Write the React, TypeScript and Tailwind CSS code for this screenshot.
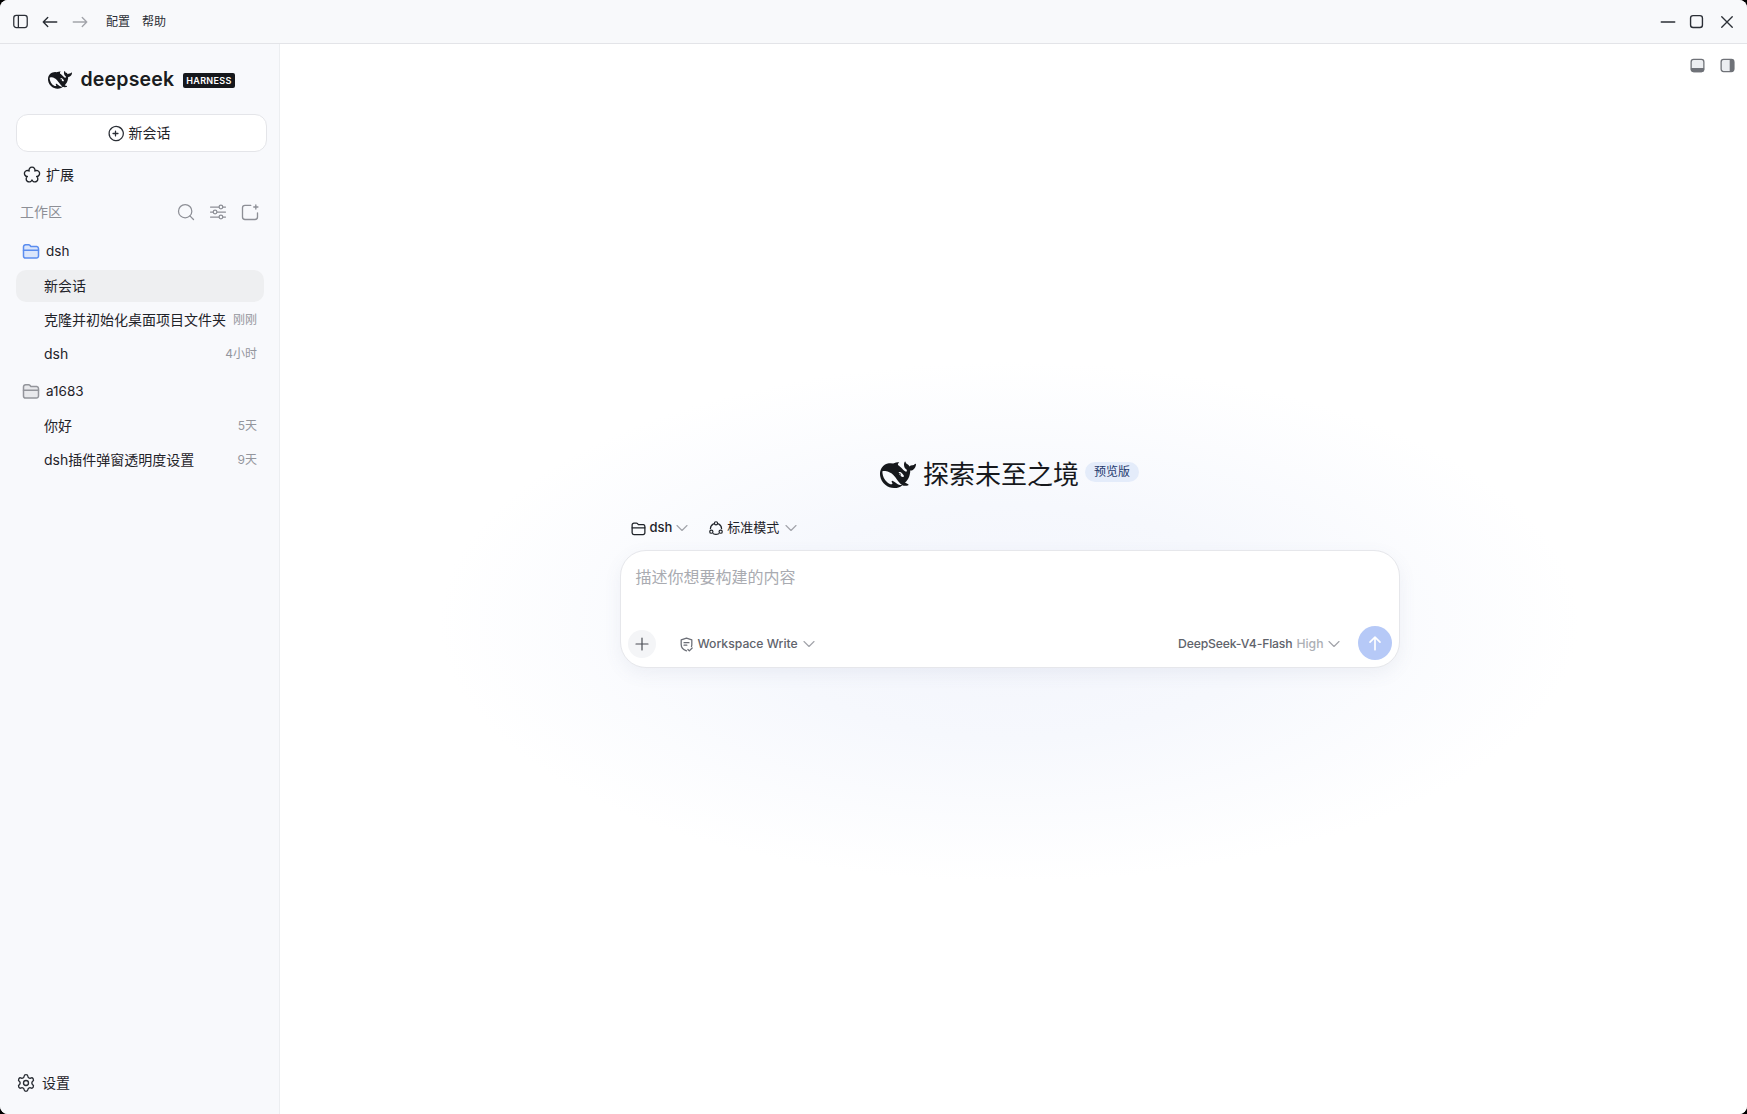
import { ChevronDown, Search, Settings } from 'lucide-react';

const WHALE =
  'M23.748 4.482c-.254-.124-.364.113-.512.234-.051.039-.094.09-.137.136-.372.397-.806.657-1.373.626-.829-.046-1.537.214-2.163.848-.133-.782-.575-1.248-1.247-1.548-.352-.156-.708-.311-.955-.65-.172-.241-.219-.51-.305-.774-.055-.16-.11-.323-.293-.35-.2-.031-.278.136-.356.276-.313.572-.434 1.202-.422 1.84.027 1.436.633 2.58 1.838 3.393.137.093.172.187.129.323-.082.28-.18.552-.266.833-.055.179-.137.217-.329.14a5.526 5.526 0 01-1.736-1.18c-.857-.828-1.631-1.742-2.597-2.458a11.365 11.365 0 00-.689-.471c-.985-.957.13-1.743.388-1.836.27-.098.093-.432-.779-.428-.872.004-1.67.295-2.687.684a3.055 3.055 0 01-.465.137 9.597 9.597 0 00-2.883-.102c-1.885.21-3.39 1.102-4.497 2.623C.082 8.606-.231 10.684.152 12.85c.403 2.284 1.569 4.175 3.36 5.653 1.858 1.533 3.997 2.284 6.438 2.14 1.482-.085 3.133-.284 4.994-1.86.47.234.962.327 1.78.397.63.059 1.236-.03 1.705-.128.735-.156.684-.837.419-.961-2.155-1.004-1.682-.595-2.113-.926 1.096-1.296 2.746-2.642 3.392-7.003.05-.347.007-.565 0-.845-.004-.17.035-.237.23-.256a4.173 4.173 0 001.545-.475c1.396-.763 1.96-2.015 2.093-3.517.02-.23-.004-.467-.247-.588zM11.581 18c-2.089-1.642-3.102-2.183-3.52-2.16-.392.024-.321.471-.235.763.09.288.207.486.371.739.114.167.192.416-.113.603-.673.416-1.842-.14-1.897-.167-1.361-.802-2.5-1.86-3.301-3.307-.774-1.393-1.224-2.887-1.298-4.482-.02-.386.093-.522.477-.592a4.696 4.696 0 011.529-.039c2.132.312 3.946 1.265 5.468 2.774.868.86 1.525 1.887 2.202 2.891.72 1.066 1.494 2.082 2.48 2.914.348.292.625.514.891.677-.802.09-2.14.11-3.054-.614zm1-6.44a.306.306 0 01.415-.287.302.302 0 01.2.288.306.306 0 01-.31.307.303.303 0 01-.304-.308zm3.11 1.596c-.2.081-.399.151-.59.16a1.245 1.245 0 01-.798-.254c-.274-.23-.47-.358-.552-.758a1.73 1.73 0 01.016-.588c.07-.327-.008-.537-.239-.727-.187-.156-.426-.199-.688-.199a.559.559 0 01-.254-.078c-.11-.054-.2-.19-.114-.358.028-.054.16-.186.192-.21.356-.202.767-.136 1.146.016.352.144.618.408 1.001.782.391.451.462.576.685.914.176.265.336.537.445.848.067.195-.019.354-.25.452z';

const Whale = ({ className }: { className: string }) => (
  <svg viewBox="0 0 24 24" fill="currentColor" className={className}>
    <path d={WHALE} />
  </svg>
);

const Stroke = ({ className, children }: { className: string; children: React.ReactNode }) => (
  <svg
    viewBox="0 0 24 24"
    fill="none"
    stroke="currentColor"
    strokeWidth="1.8"
    strokeLinecap="round"
    strokeLinejoin="round"
    className={className}
  >
    {children}
  </svg>
);

const FolderIcon = ({ className, fill }: { className: string; fill: string }) => (
  <Stroke className={className}>
    <path d="M3 18V7a2.5 2.5 0 0 1 2.5-2.5h3.6a2 2 0 0 1 1.5.7l1.2 1.4h7.2A2.5 2.5 0 0 1 21 9.1V18a2.5 2.5 0 0 1-2.5 2.5h-13A2.5 2.5 0 0 1 3 18Z" fill={fill} />
    <path d="M3 11h18" />
  </Stroke>
);

const Chevron = ({ className = '' }: { className?: string }) => (
  <ChevronDown className={`h-5 w-5 shrink-0 text-[#a3a5ab] ${className}`} strokeWidth={1.4} />
);

const sessionRow = 'flex h-8 items-center justify-between rounded-[10px] pl-7 pr-[7px] text-sm text-[#1f2329]';

const Session = ({ title, time, active }: { title: string; time?: string; active?: boolean }) => (
  <div className={active ? `${sessionRow} bg-[#eeeff1]` : sessionRow}>
    <span>{title}</span>
    {time && <span className="text-xs text-[#94969d]">{time}</span>}
  </div>
);

export default function App() {
  return (
    <div className="h-[1114px] w-[1747px] bg-black">
      <div className="flex h-full w-full flex-col overflow-hidden rounded-[8px] bg-white font-['Inter','Noto_Sans_CJK_SC',sans-serif] text-[#1f2329]">
        <header className="flex h-11 shrink-0 items-center border-b border-[#e3e4e8] bg-[#f8f9fb]">
          <div className="flex w-full items-center pl-3 pr-[11px] text-[#2b2f36]">
            <Stroke className="h-[17px] w-[17px]">
              <rect x="2.5" y="3.5" width="19" height="17" rx="3.5" />
              <path d="M9 4v16" />
            </Stroke>
            <Stroke className="ml-3 h-[18px] w-[18px]">
              <path d="M3 12h18M9 6l-6 6 6 6" />
            </Stroke>
            <Stroke className="ml-3 h-[18px] w-[18px] text-[#a3a5ab]">
              <path d="M3 12h18M15 6l6 6-6 6" />
            </Stroke>
            <span className="ml-[17px] text-xs">配置</span>
            <span className="ml-3 text-xs">帮助</span>
            <Stroke className="ml-auto h-[18px] w-[18px]">
              <path d="M3 12h18" />
            </Stroke>
            <Stroke className="ml-3 h-[15px] w-[15px]">
              <rect x="2.5" y="2.5" width="19" height="19" rx="4" strokeWidth="2.2" />
            </Stroke>
            <Stroke className="ml-[14px] h-[18px] w-[18px]">
              <path d="m5 5 14 14M19 5 5 19" />
            </Stroke>
          </div>
        </header>

        <div className="flex min-h-0 flex-1">
          <aside className="flex w-[280px] shrink-0 flex-col border-r border-[#eceef1] bg-[#f8f9fc] pl-4 pr-[15px]">
            <div className="mt-[26px] flex h-5 items-center justify-center pl-[3px]">
              <Whale className="h-6 w-6 text-[#16181c]" />
              <span className="ml-2 text-[19.5px] font-semibold leading-none tracking-[0.2px] text-[#1a1c20]">deepseek</span>
              <span className="ml-[9px] rounded-[2px] bg-[#16181c] px-[3px] py-[2px] text-[9px] font-semibold leading-[11px] tracking-[0.3px] text-white">
                HARNESS
              </span>
            </div>

            <button
              type="button"
              className="mt-6 flex h-[38px] w-[251px] shrink-0 items-center justify-center gap-[5px] rounded-xl border border-[#e4e5e9] bg-white pr-[6px] text-sm text-[#1f2329]"
            >
              <Stroke className="h-[17px] w-[17px] text-[#2b2f36]">
                <path d="M7.5 20.4A10 10 0 1 1 12 22c-1.2 0-2.6-.3-3.5-.8" />
                <path d="M12 8.5v7M8.5 12h7" />
              </Stroke>
              新会话
            </button>

            <div className="mt-[14px] flex h-[18px] items-center gap-[5px] pl-[7px] text-sm">
              <Stroke className="h-[18px] w-[18px] text-[#1f2329]">
                <path d="M8.18 6.74A4 4 0 1 1 15.82 6.74A4 4 0 1 1 18.18 14.01A4 4 0 1 1 12 18.5A4 4 0 1 1 5.82 14.01A4 4 0 1 1 8.18 6.74Z" />
              </Stroke>
              扩展
            </div>

            <div className="mt-[18px] flex h-5 items-center pl-1 pr-1 text-[#8d8f96]">
              <span className="text-sm">工作区</span>
              <Search className="ml-auto h-5 w-5" strokeWidth={1.5} />
              <Stroke className="ml-3 h-5 w-5">
                <path d="M3 6h10M18 6h3M3 12h3M11 12h10M3 18h10M18 18h3" strokeWidth="1.5" />
                <circle cx="15.5" cy="6" r="2.2" strokeWidth="1.5" />
                <circle cx="8.5" cy="12" r="2.2" strokeWidth="1.5" />
                <circle cx="15.5" cy="18" r="2.2" strokeWidth="1.5" />
              </Stroke>
              <Stroke className="ml-3 h-5 w-5">
                <path d="M13 4H6a3 3 0 0 0-3 3v11a3 3 0 0 0 3 3h12a3 3 0 0 0 3-3v-5" strokeWidth="1.6" />
                <path d="M19 3.5v5M16.5 6h5" strokeWidth="1.6" />
              </Stroke>
            </div>

            <div className="mt-[19px] flex h-5 items-center gap-[5px] pl-[5px] text-[13.5px]">
              <FolderIcon className="h-5 w-5 text-[#5b8def]" fill="#dbe6fb" />
              dsh
            </div>
            <div className="mt-[9px] flex flex-col gap-[2px]">
              <Session title="新会话" active />
              <Session title="克隆并初始化桌面项目文件夹" time="刚刚" />
              <Session title="dsh" time="4小时" />
            </div>
            <div className="mt-[11px] flex h-5 items-center gap-[5px] pl-[5px] text-[13.5px]">
              <FolderIcon className="h-5 w-5 text-[#93959b]" fill="#e8e9ec" />
              a1683
            </div>
            <div className="mt-[9px] flex flex-col gap-[2px]">
              <Session title="你好" time="5天" />
              <Session title="dsh插件弹窗透明度设置" time="9天" />
            </div>

            <div className="mb-[21px] mt-auto flex h-5 items-center gap-[6px] text-sm">
              <Settings className="h-5 w-5 text-[#2b2f36]" strokeWidth={1.6} />
              设置
            </div>
          </aside>

          <main className="relative flex min-w-0 flex-1 flex-col items-center bg-[radial-gradient(ellipse_570px_260px_at_49.7%_54%,#f3f5fc_0%,#f6f8fd_45%,#ffffff_100%)] pr-2">
            <div className="absolute right-[11px] top-[13px] flex gap-[13px] text-[#6f7278]">
              <Stroke className="h-[17px] w-[17px]">
                <rect x="3" y="3.5" width="18" height="17" rx="3.5" fill="#eceef1" />
                <path d="M3.5 16.5h17v1a3 3 0 0 1-3 3h-11a3 3 0 0 1-3-3Z" fill="currentColor" />
              </Stroke>
              <Stroke className="h-[17px] w-[17px]">
                <rect x="3" y="3.5" width="18" height="17" rx="3.5" fill="#eceef1" />
                <path d="M16 4h1.5a3 3 0 0 1 3 3v10a3 3 0 0 1-3 3H16Z" fill="currentColor" />
              </Stroke>
            </div>

            <div className="mt-[413px] flex h-9 items-center">
              <Whale className="h-9 w-9 text-[#16181c]" />
              <h1 className="ml-[7px] text-[26px] font-normal leading-9 text-[#16181c]">探索未至之境</h1>
              <span className="mb-[6px] ml-[6px] rounded-full bg-[#e4ecfa] px-[9px] py-[2px] text-xs leading-4 text-[#1f3a6e]">预览版</span>
            </div>

            <div className="mt-[25px] flex h-5 w-[780px] items-center pl-[10px] text-[13px] font-medium text-[#1f2329]">
              <Stroke className="h-[17px] w-[17px]">
                <path d="M3 18V7a2.5 2.5 0 0 1 2.5-2.5h3.6a2 2 0 0 1 1.5.7l1.2 1.4h7.2A2.5 2.5 0 0 1 21 9.1V18a2.5 2.5 0 0 1-2.5 2.5h-13A2.5 2.5 0 0 1 3 18Z" />
                <path d="M3 11h18" />
              </Stroke>
              <span className="ml-[3px]">dsh</span>
              <Chevron />
              <Stroke className="ml-4 h-4 w-4">
                <circle cx="12" cy="5" r="2.4" />
                <circle cx="5" cy="17.5" r="2.4" />
                <circle cx="19" cy="17.5" r="2.4" />
                <path d="M8.2 5.8A8.5 8.5 0 0 0 3.6 13M15.8 5.8a8.5 8.5 0 0 1 4.6 7.2M8 20.5a8.5 8.5 0 0 0 8 0" />
              </Stroke>
              <span className="ml-[3px] font-normal">标准模式</span>
              <Chevron className="ml-[2px]" />
            </div>

            <div className="mt-3 flex h-[118px] w-[780px] flex-col rounded-[26px] border border-[#e6e7eb] bg-white px-[7px] shadow-[0_6px_18px_rgba(90,100,140,0.08)]">
              <div className="pl-2 pt-[14px] text-base leading-6 text-[#a9abb1]">描述你想要构建的内容</div>
              <div className="mb-[5px] mt-auto flex h-9 items-center">
                <button type="button" className="flex h-7 w-7 items-center justify-center rounded-full bg-[#f4f5f7] text-[#4a4d54]">
                  <Stroke className="h-4 w-4">
                    <path d="M12 3v18M3 12h18" />
                  </Stroke>
                </button>
                <Stroke className="ml-[22px] h-[17px] w-[17px] text-[#6b6e76]">
                  <path d="M12 21c-4.3-1.5-7.5-4.500-7.500-9V5.500L12 3l7.500 2.500V12c0 1-.2 2-.5 2.800" />
                  <path d="M8.500 9.500h7M8.500 13h4M14 19l2 2 4-4" />
                </Stroke>
                <span className="ml-[3px] text-[12.2px] font-medium text-[#60636b]">Workspace Write</span>
                <Chevron className="ml-[1px]" />
                <span className="ml-auto text-[12.2px] font-medium tracking-[-0.15px] text-[#60636b]">DeepSeek-V4-Flash</span>
                <span className="ml-1 text-[12.2px] font-medium text-[#adafb5]">High</span>
                <Chevron />
                <button type="button" className="mb-[2px] ml-[14px] flex h-[34px] w-[34px] items-center justify-center rounded-full bg-[#b6c9f7] text-white">
                  <Stroke className="h-5 w-5">
                    <path d="M12 20V5M6 11l6-6 6 6" strokeWidth="2" />
                  </Stroke>
                </button>
              </div>
            </div>
          </main>
        </div>
      </div>
    </div>
  );
}
